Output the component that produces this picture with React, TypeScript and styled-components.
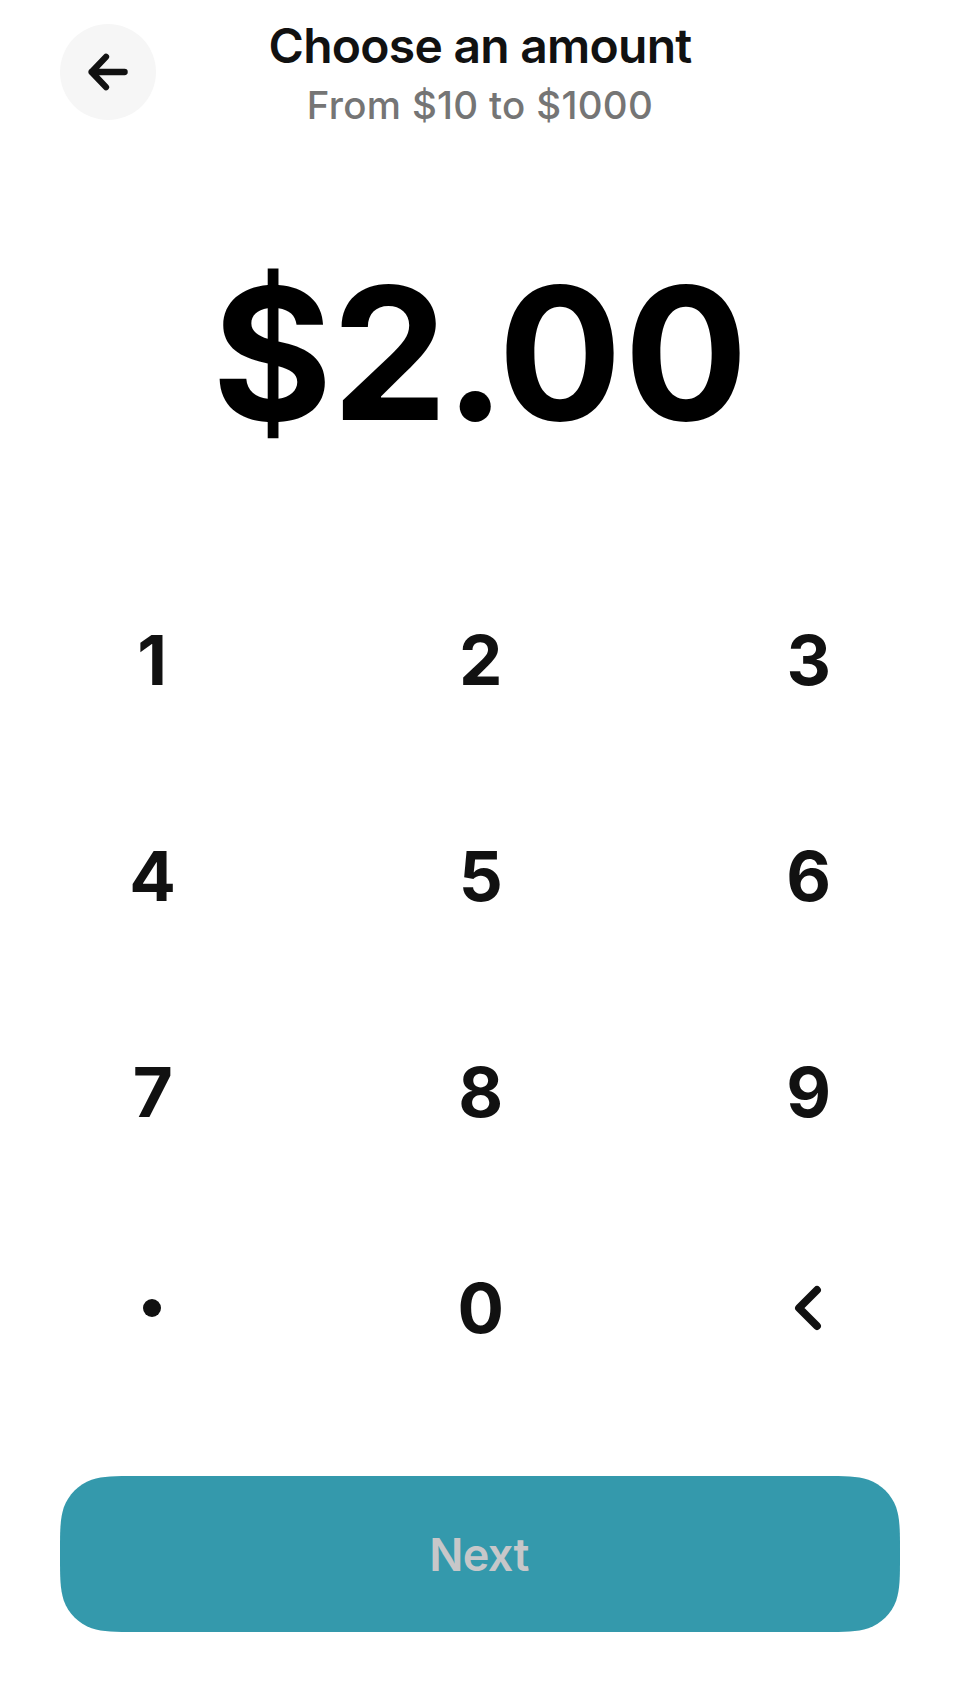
import React from "react";
import styled, { createGlobalStyle } from "styled-components";

const GlobalStyle = createGlobalStyle`
  * { box-sizing: border-box; }
  body { margin: 0; background: #fff; font-family: Inter, "Liberation Sans", sans-serif; color: #111; }
  button { font: inherit; color: inherit; border: 0; padding: 0; background: none; cursor: pointer; }
`;

const Screen = styled.main`
  display: flex;
  flex-direction: column;
  height: 1704px;
  padding: 24px 60px 0;
`;

const Header = styled.header`
  display: grid;
  grid-template-columns: 96px 1fr 96px;
  height: 96px;
`;

const BackButton = styled.button`
  display: flex;
  width: 96px;
  height: 96px;
  border-radius: 50%;
  background: #f6f6f6;
`;

const Heading = styled.div`
  text-align: center;
`;

const Title = styled.h1`
  margin: -7px 0 0;
  font-size: 48px;
  font-weight: 600;
  line-height: 58px;
  letter-spacing: -0.74px;
`;

const Subtitle = styled.p`
  margin: 6px 0 0;
  font-size: 38.5px;
  font-weight: 500;
  line-height: 48px;
  letter-spacing: 0.3px;
  color: #757575;
`;

const Amount = styled.div`
  height: 228px;
  margin-top: 119px;
  text-align: center;
  font-size: 184px;
  font-weight: 700;
  line-height: 228px;
  font-kerning: none;
  color: #000;
`;

const Glyph = styled.span<{ $tracking: number }>`
  letter-spacing: ${(p) => p.$tracking}px;
`;

const Keypad = styled.div`
  display: grid;
  grid-template-columns: repeat(3, 184px);
  grid-auto-rows: 216px;
  justify-content: space-between;
  margin-top: 85px;
`;

const Key = styled.button`
  display: flex;
  align-items: center;
  justify-content: center;
  font-size: 69px;
  font-weight: 700;
`;

const Digit = styled.span<{ $narrow: boolean }>`
  padding-left: ${(p) => (p.$narrow ? 0 : 1.4)}px;
`;

const Dot = styled.span`
  width: 18px;
  height: 18px;
  border-radius: 50%;
  background: #111;
`;

const Stroke = styled.svg<{ $weight: number }>`
  fill: none;
  stroke: #111;
  stroke-width: ${(p) => p.$weight};
  stroke-linecap: round;
  stroke-linejoin: round;
`;

/* Outline of a rounded rectangle whose corners ease continuously into the edges. */
function smoothRect(w: number, h: number, r: number) {
  const corner = (cx: number, cy: number, sx: number, sy: number) => (a: number, b: number) =>
    `${(cx + sx * a * r).toFixed(2)} ${(cy + sy * b * r).toFixed(2)}`;
  const towardSide = (p: (a: number, b: number) => string) =>
    `L${p(1.52866, 0)}C${p(1.08849, 0)} ${p(0.86841, 0)} ${p(0.63149, 0.07491)}` +
    `C${p(0.37282, 0.16906)} ${p(0.16906, 0.37282)} ${p(0.07491, 0.63149)}` +
    `C${p(0, 0.86841)} ${p(0, 1.08849)} ${p(0, 1.52866)}`;
  const fromSide = (p: (a: number, b: number) => string) =>
    `L${p(0, 1.52866)}C${p(0, 1.08849)} ${p(0, 0.86841)} ${p(0.07491, 0.63149)}` +
    `C${p(0.16906, 0.37282)} ${p(0.37282, 0.16906)} ${p(0.63149, 0.07491)}` +
    `C${p(0.86841, 0)} ${p(1.08849, 0)} ${p(1.52866, 0)}`;
  return (
    `M${w / 2} 0` +
    towardSide(corner(w, 0, -1, 1)) +
    fromSide(corner(w, h, -1, -1)) +
    towardSide(corner(0, h, 1, -1)) +
    fromSide(corner(0, 0, 1, 1)) +
    "Z"
  );
}

const NextButton = styled.button`
  display: flex;
  align-items: center;
  justify-content: center;
  height: 156px;
  margin-top: 60px;
  padding-right: 2px;
  background: #3499ac;
  clip-path: path("${smoothRect(840, 156, 50)}");
  color: #c7c7c9;
  font-size: 45px;
  font-weight: 600;
  letter-spacing: -0.6px;
`;

const AMOUNT: [string, number][] = [["$", -0.7], ["2", -3], [".", -8.1], ["0", 2], ["0", 0]];
const KEYS = ["1", "2", "3", "4", "5", "6", "7", "8", "9", ".", "0", "back"];

function keyFace(key: string) {
  if (key === ".") return <Dot />;
  if (key === "back")
    return (
      <Stroke $weight={7.8} width="44" height="48" viewBox="0 0 44 48">
        <path d="M31 6 13 24l18 18" />
      </Stroke>
    );
  return <Digit $narrow={key === "1"}>{key}</Digit>;
}

export default function App() {
  return (
    <Screen>
      <GlobalStyle />
      <Header>
        <BackButton aria-label="Back">
          <Stroke $weight={6.3} width="96" height="96" viewBox="0 0 96 96">
            <path d="M46 32.8 31.6 48 46 63.2M31.6 48h33" />
          </Stroke>
        </BackButton>
        <Heading>
          <Title>Choose an amount</Title>
          <Subtitle>From $10 to $1000</Subtitle>
        </Heading>
      </Header>
      <Amount>
        {AMOUNT.map(([char, tracking], i) => (
          <Glyph key={i} $tracking={tracking}>{char}</Glyph>
        ))}
      </Amount>
      <Keypad>
        {KEYS.map((key) => (
          <Key key={key} aria-label={key === "back" ? "Delete" : undefined}>{keyFace(key)}</Key>
        ))}
      </Keypad>
      <NextButton>Next</NextButton>
    </Screen>
  );
}
